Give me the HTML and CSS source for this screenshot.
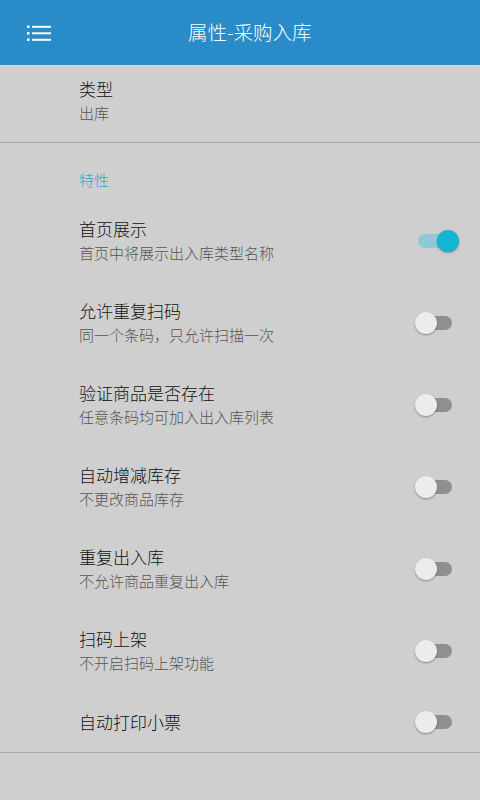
FILE: index.html
```html
<!DOCTYPE html>
<html lang="zh-CN">
<head>
	<meta charset="UTF-8">
	<meta name="viewport" content="width=device-width, initial-scale=1">
	<title>属性-采购入库</title>
	<link rel="stylesheet" href="styles.css">
</head>
<body>
	<header class="app-bar">
		<button class="menu-btn" aria-label="菜单">
			<svg width="26" height="18" viewBox="0 0 26 18">
				<rect x="1" y="1.5" width="2.5" height="2.5" fill="#fff"/>
				<rect x="1" y="8" width="2.5" height="2.5" fill="#fff"/>
				<rect x="1" y="14.5" width="2.5" height="2.5" fill="#fff"/>
				<rect x="6" y="1.8" width="19" height="2" fill="#fff"/>
				<rect x="6" y="8.3" width="19" height="2" fill="#fff"/>
				<rect x="6" y="14.8" width="19" height="2" fill="#fff"/>
			</svg>
		</button>
		<h1 class="app-title">属性-采购入库</h1>
	</header>

	<div class="pref pref-type">
		<div class="pref-text">
			<div class="pref-title">类型</div>
			<div class="pref-summary">出库</div>
		</div>
	</div>

	<div class="category">特性</div>

	<div class="pref">
		<div class="pref-text">
			<div class="pref-title">首页展示</div>
			<div class="pref-summary">首页中将展示出入库类型名称</div>
		</div>
		<span class="switch on"><span class="thumb"></span></span>
	</div>

	<div class="pref">
		<div class="pref-text">
			<div class="pref-title">允许重复扫码</div>
			<div class="pref-summary">同一个条码，只允许扫描一次</div>
		</div>
		<span class="switch"><span class="thumb"></span></span>
	</div>

	<div class="pref">
		<div class="pref-text">
			<div class="pref-title">验证商品是否存在</div>
			<div class="pref-summary">任意条码均可加入出入库列表</div>
		</div>
		<span class="switch"><span class="thumb"></span></span>
	</div>

	<div class="pref">
		<div class="pref-text">
			<div class="pref-title">自动增减库存</div>
			<div class="pref-summary">不更改商品库存</div>
		</div>
		<span class="switch"><span class="thumb"></span></span>
	</div>

	<div class="pref">
		<div class="pref-text">
			<div class="pref-title">重复出入库</div>
			<div class="pref-summary">不允许商品重复出入库</div>
		</div>
		<span class="switch"><span class="thumb"></span></span>
	</div>

	<div class="pref">
		<div class="pref-text">
			<div class="pref-title">扫码上架</div>
			<div class="pref-summary">不开启扫码上架功能</div>
		</div>
		<span class="switch"><span class="thumb"></span></span>
	</div>

	<div class="pref pref-last">
		<div class="pref-text">
			<div class="pref-title">自动打印小票</div>
		</div>
		<span class="switch"><span class="thumb"></span></span>
	</div>
</body>
</html>
```

FILE: styles.css
```css
:root {
	--bar-color: #2a8bc9;
	--bg-color: #cfcfcf;
	--title-color: #111;
	--summary-color: #555;
	--accent: #12b5d2;
	--divider: #a9a9a9;
}

body {
	margin: 0;
	padding: 0;
	background: var(--bg-color);
	font-family: "Noto Sans CJK SC", "Noto Sans", sans-serif;
	color: var(--title-color);
}

.app-bar {
	height: 65px;
	background: var(--bar-color);
	border-bottom: 1px solid #e3d9d0;
	display: flex;
	align-items: center;
}

.menu-btn {
	width: 74px;
	height: 65px;
	padding: 0 0 0 26px;
	margin: 0;
	border: none;
	background: none;
	display: flex;
	align-items: center;
}

.app-title {
	margin: 0 0 0 114px;
	font-size: 19.5px;
	font-weight: 300;
	color: #fff;
	line-height: 24px;
	padding-bottom: 2px;
}

.pref {
	display: flex;
	align-items: center;
	min-height: 61px;
	box-sizing: border-box;
	padding: 17px 28px 17px 79px;
}

.pref-type {
	padding-top: 11px;
	border-bottom: 1px solid var(--divider);
}

.pref-last {
	padding-top: 0;
	padding-bottom: 0;
	border-bottom: 1px solid var(--divider);
}

.pref-text {
	flex: 1;
}

.pref-title {
	font-size: 17px;
	font-weight: 300;
	line-height: 24px;
}

.pref-summary {
	font-size: 15px;
	font-weight: 300;
	line-height: 24px;
	color: var(--summary-color);
}

.category {
	padding: 27px 0 10px 79px;
	font-size: 15px;
	font-weight: 300;
	line-height: 20px;
	color: var(--accent);
}

.switch {
	position: relative;
	width: 34px;
	height: 14px;
	border-radius: 7px;
	background: #8f8f8f;
	flex: none;
}

.switch .thumb {
	position: absolute;
	top: -4px;
	left: -3px;
	width: 22px;
	height: 22px;
	border-radius: 50%;
	background: #ececec;
	box-shadow: 0 1px 2px rgba(0, 0, 0, 0.35);
}

.switch.on {
	background: #8ccad7;
}

.switch.on .thumb {
	left: 19px;
	background: var(--accent);
}
```
